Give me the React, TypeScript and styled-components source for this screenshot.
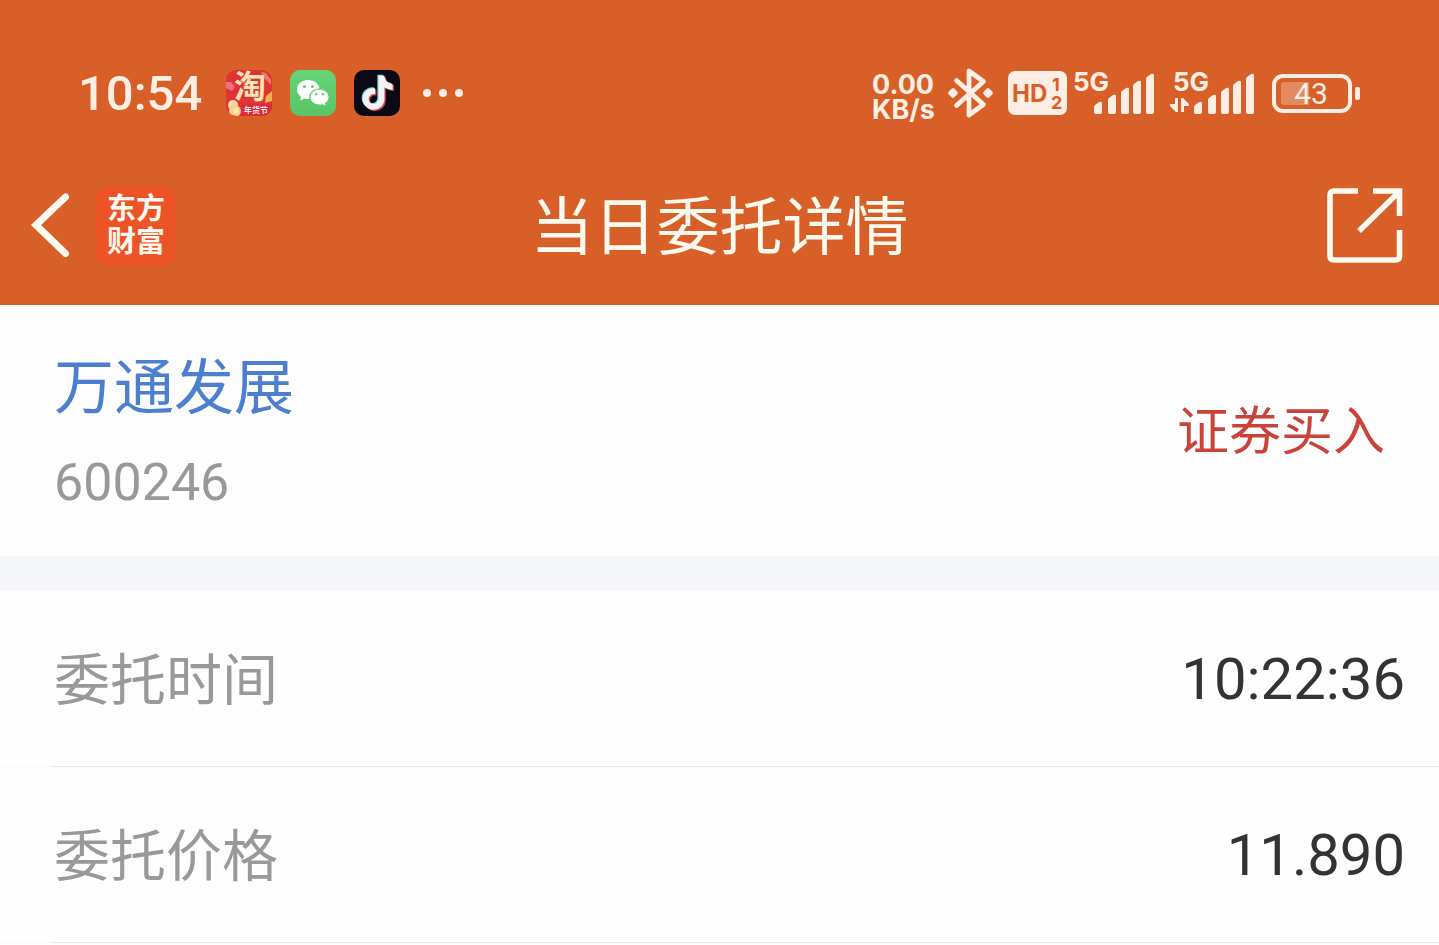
import React from "react";
import styled, { createGlobalStyle } from "styled-components";
import { FaTiktok } from "react-icons/fa";

const ORANGE = "#d86028";
const CREAM = "#ffeee4";
const SANS = 'Roboto, "Noto Sans CJK SC", sans-serif';

const GlobalStyle = createGlobalStyle`
  * { box-sizing: border-box; }
  body { margin: 0; background: #fefefe; font-family: ${SANS}; }
  svg { display: block; flex: none; overflow: visible; }
`;

const Header = styled.header`
  background: ${ORANGE};
  padding-top: 40px;
`;

const StatusBar = styled.div`
  display: flex;
  justify-content: space-between;
  align-items: center;
  height: 106px;
  padding: 0 79px 0 78px;
  color: ${CREAM};
`;

const StatusGroup = styled.div<{ $gap: number }>`
  display: flex;
  align-items: center;
  gap: ${(p) => p.$gap}px;
`;

const Clock = styled.time`
  width: 130px;
  padding-top: 2px;
  font-size: 49px;
  font-weight: 500;
  line-height: 60px;
`;

const Speed = styled.div`
  display: flex;
  flex-direction: column;
  width: 62px;
  margin-top: 8px;
  font-family: Inter, sans-serif;
  font-size: 27px;
  font-weight: 700;
  line-height: 25px;
  white-space: nowrap;
`;

const NavBar = styled.nav`
  display: grid;
  grid-template-columns: 1fr auto 1fr;
  align-items: center;
  height: 159px;
  padding: 0 36px 0 30px;
`;

const NavStart = styled.div`
  display: flex;
  align-items: center;
  gap: 26px;
`;

const IconButton = styled.button`
  padding: 0;
  border: 0;
  background: none;
  cursor: pointer;
`;

const ShareButton = styled(IconButton)`
  justify-self: end;
`;

const Brand = styled.a`
  display: flex;
  flex-direction: column;
  align-items: center;
  justify-content: center;
  width: 80px;
  height: 80px;
  border-radius: 14px;
  background: #ec5428;
  color: #fff8ee;
  font-size: 29px;
  font-weight: 700;
  line-height: 33px;
  text-decoration: none;
`;

const Title = styled.h1`
  margin: 0;
  padding: 5px 0 0 6px;
  color: #fffaf0;
  font-size: 63px;
  font-weight: 400;
  line-height: 80px;
`;

const Summary = styled.section`
  display: flex;
  align-items: center;
  justify-content: space-between;
  height: 251px;
  padding: 0 54px;
`;

const Stock = styled.div`
  display: flex;
  flex-direction: column;
  gap: 24px;
`;

const StockName = styled.a`
  color: #4d7fd0;
  font-size: 60px;
  line-height: 80px;
  text-decoration: none;
`;

const StockCode = styled.span`
  color: #999;
  font-size: 52px;
  line-height: 60px;
`;

const Side = styled.span`
  padding-top: 4px;
  color: #cb4239;
  font-size: 52px;
  line-height: 80px;
`;

const Details = styled.dl`
  margin: 0;
  border-top: 35px solid #f5f7fa;
`;

const Row = styled.div`
  display: flex;
  align-items: center;
  justify-content: space-between;
  height: 176px;
  padding: 0 34px 0 54px;
  border-bottom: 1px solid;
  border-image: linear-gradient(to right, #f7f7f7 52px, #ebebeb 52px) 1;
`;

const Label = styled.dt`
  padding-top: 4px;
  color: #999;
  font-size: 56px;
  line-height: 80px;
`;

const Value = styled.dd`
  margin: 0;
  color: #333;
  font-size: 58px;
  line-height: 80px;
`;

const TaobaoIcon = () => (
  <svg width="46" height="46" viewBox="0 0 46 46" role="img" aria-label="淘宝">
    <defs>
      <clipPath id="tb"><rect width="46" height="46" rx="10" /></clipPath>
    </defs>
    <g clipPath="url(#tb)">
      <rect width="46" height="46" fill="#df3434" />
      <path d="M0 12l5 0 4 5-3 4-6-3z" fill="#ef6f80" />
      <path d="M46 21l-6 5-1 7 7-2z" fill="#f2ae50" />
      <path d="M35 2l5 1 5 7v5l-6-6z" fill="#ec7a60" />
      <text x="24" y="28" textAnchor="middle" fontSize="32" fontWeight="700" fill="#fbe3b8" fontFamily="Noto Sans CJK SC, sans-serif">淘</text>
      <path d="M15 46V39q0-5 5-5h26v12z" fill="#d92c3b" />
      <circle cx="7" cy="35" r="5" fill="#f7d9a4" />
      <circle cx="9" cy="41" r="6" fill="#f5cf8c" />
      <circle cx="10" cy="41" r="3" fill="#fbe9a6" />
      <text x="30" y="43" textAnchor="middle" fontSize="8" fontWeight="500" fill="#fff" fontFamily="Noto Sans CJK SC, sans-serif">年货节</text>
    </g>
  </svg>
);

const WeChatIcon = () => (
  <svg width="46" height="46" viewBox="0 0 46 46" role="img" aria-label="微信">
    <defs>
      <linearGradient id="wx" x2="0" y2="1">
        <stop stopColor="#66d477" />
        <stop offset="1" stopColor="#5ac468" />
      </linearGradient>
    </defs>
    <rect width="46" height="46" rx="10" fill="url(#wx)" />
    <path d="M18 10c-6 0-11 4-11 9.500 0 3 1.500 5.500 4 7.200l-.6 4 4-2.300c1.200.4 2.400.5 3.600.5 6.200 0 11.500-4 11.500-9.500S24.300 10 18 10z" fill="#fff" />
    <path d="M29.500 18.800c-5.300 0-9.700 3.600-9.700 8.200s4.400 8.200 9.700 8.200c1.100 0 2.200-.1 3.200-.5l3.600 2-.7-3.500c2.200-1.500 3.600-3.700 3.600-6.200 0-4.600-4.400-8.200-9.700-8.200z" fill="#fff" stroke="#5fcb6f" strokeWidth="1.200" />
    <circle cx="14.500" cy="16.500" r="1.500" fill="#5fcb6f" />
    <circle cx="22.500" cy="16.500" r="1.500" fill="#5fcb6f" />
    <circle cx="26.200" cy="24.300" r="1.200" fill="#5fcb6f" />
    <circle cx="32.800" cy="24.300" r="1.200" fill="#5fcb6f" />
  </svg>
);

const DouyinIcon = () => (
  <svg width="46" height="46" viewBox="0 0 46 46" role="img" aria-label="抖音">
    <rect width="46" height="46" rx="10" fill="#0b0a14" />
    <FaTiktok x="5.500" y="4.800" size="34" color="#6fdde0" />
    <FaTiktok x="8" y="7" size="34" color="#d84a5c" />
    <FaTiktok x="6.700" y="5.800" size="34" color="#f7f3f4" />
  </svg>
);

const MoreIcon = () => (
  <svg width="46" height="10" viewBox="-4 0 46 10" fill={CREAM} aria-hidden="true">
    <circle cx="5" cy="5" r="4" />
    <circle cx="21" cy="5" r="4" />
    <circle cx="37" cy="5" r="4" />
  </svg>
);

const BluetoothIcon = () => (
  <svg width="46" height="50" viewBox="0 0 46 50" role="img" aria-label="蓝牙">
    <path d="M8.500 12.500L35.500 36.500 21 47V3l14.500 10.500L8.500 37.500" fill="none" stroke={CREAM} strokeWidth="4.800" strokeLinejoin="round" strokeLinecap="round" />
    <rect x="1" y="21" width="8" height="8" rx="2" transform="rotate(45 5 25)" fill={CREAM} />
    <rect x="36" y="21" width="8" height="8" rx="2" transform="rotate(45 40 25)" fill={CREAM} />
  </svg>
);

const HdIcon = () => (
  <svg width="59" height="44" viewBox="0 0 59 44" fontFamily="Inter, sans-serif" fontWeight="700" fill={ORANGE}>
    <rect width="59" height="44" rx="7" fill={CREAM} />
    <text x="4" y="31" fontSize="24">HD</text>
    <text x="44" y="20" fontSize="18">1</text>
    <text x="43" y="38" fontSize="18">2</text>
  </svg>
);

const BARS = [
  { x: 24, top: 31 },
  { x: 38, top: 24 },
  { x: 51, top: 17 },
  { x: 63, top: 10 },
  { x: 76, top: 3 },
];

const SignalIcon = ({ data = false }: { data?: boolean }) => (
  <svg width="86" height="42" viewBox="0 0 86 42" fill={CREAM}>
    <text x="3" y="19" fontSize="26" fontWeight="700" fontFamily="Inter, sans-serif">5G</text>
    {BARS.map((b) => (
      <path
        key={b.x}
        d={`M${b.x} ${b.top + 4}q0-1 1-2l4-3q3-1 3 1V40q0 2-2 2h-4q-2 0-2-2z`}
      />
    ))}
    {data && (
      <path d="M5 26h3v14H6l-6-6v-2h5zM11 26h2l6 6v2h-5v6h-3z" />
    )}
  </svg>
);

const BatteryIcon = () => (
  <svg width="90" height="40" viewBox="-2 0 90 40">
    <rect x="2" y="3" width="76" height="35" rx="9" fill="none" stroke={CREAM} strokeWidth="4" />
    <path d="M12 9h25v23H12q-3 0-3-3V12q0-3 3-3z" fill="#e48a62" />
    <rect x="83" y="14" width="5" height="13" rx="2" fill={CREAM} />
    <text x="39" y="31" textAnchor="middle" fontSize="30" fontWeight="400" fontFamily="Roboto, sans-serif" fill={CREAM}>43</text>
  </svg>
);

const BackIcon = () => (
  <svg width="40" height="64" viewBox="0 1 40 64" fill="none" stroke="#fffaf0" strokeWidth="7" strokeLinecap="round" strokeLinejoin="miter">
    <path d="M35.500 4L6 32l29.500 28.500" />
  </svg>
);

const ShareIcon = () => (
  <svg width="76" height="76" viewBox="0 1 76 76" fill="none" stroke="#fffaf0" strokeWidth="5.600">
    <path d="M31 4H7q-4 0-4 4V69q0 4 4 4h61.500q4 0 4-4V43" />
    <path d="M46 4h26.500V29M72 5L32 44" />
  </svg>
);

const rows = [
  { label: "委托时间", value: "10:22:36" },
  { label: "委托价格", value: "11.890" },
];

export default function App() {
  return (
    <>
      <GlobalStyle />
      <Header>
        <StatusBar>
          <StatusGroup $gap={18}>
            <Clock>10:54</Clock>
            <TaobaoIcon />
            <WeChatIcon />
            <DouyinIcon />
            <MoreIcon />
          </StatusGroup>
          <StatusGroup $gap={14}>
            <Speed><span>0.00</span><span>KB/s</span></Speed>
            <BluetoothIcon />
            <StatusGroup $gap={3}>
              <HdIcon />
              <SignalIcon />
            </StatusGroup>
            <SignalIcon data />
            <BatteryIcon />
          </StatusGroup>
        </StatusBar>
        <NavBar>
          <NavStart>
            <IconButton type="button" aria-label="返回"><BackIcon /></IconButton>
            <Brand href="#"><span>东方</span><span>财富</span></Brand>
          </NavStart>
          <Title>当日委托详情</Title>
          <ShareButton type="button" aria-label="分享"><ShareIcon /></ShareButton>
        </NavBar>
      </Header>
      <main>
        <Summary>
          <Stock>
            <StockName href="#">万通发展</StockName>
            <StockCode>600246</StockCode>
          </Stock>
          <Side>证券买入</Side>
        </Summary>
        <Details>
          {rows.map((r) => (
            <Row key={r.label}>
              <Label>{r.label}</Label>
              <Value>{r.value}</Value>
            </Row>
          ))}
        </Details>
      </main>
    </>
  );
}
